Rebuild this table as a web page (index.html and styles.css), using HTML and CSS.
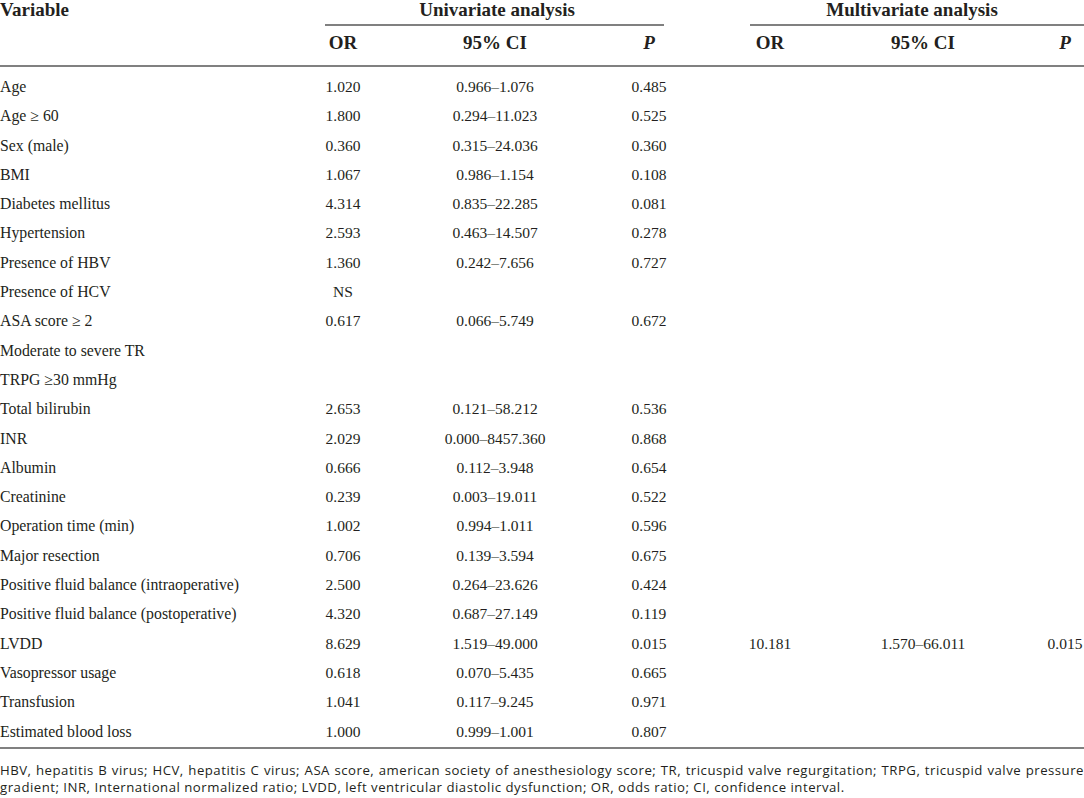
FILE: index.html
```html
<!DOCTYPE html>
<html lang="en">
<head>
<meta charset="utf-8">
<title>Table</title>
<link rel="stylesheet" href="styles.css">
</head>
<body>
<div class="page">
<table class="stats">
<colgroup>
<col class="c-var"><col class="c-or"><col class="c-ci"><col class="c-p"><col class="c-gap"><col class="c-mor"><col class="c-mci"><col class="c-mp">
</colgroup>
<thead>
<tr class="h1">
<th class="var">Variable</th>
<th colspan="3" class="grp"><div class="gtitle">Univariate analysis</div><div class="grule uni"></div></th>
<th></th>
<th colspan="3" class="grp"><div class="gtitle">Multivariate analysis</div><div class="grule multi"></div></th>
</tr>
<tr class="h2">
<th></th>
<th>OR</th>
<th>95% CI</th>
<th><i>P</i></th>
<th></th>
<th>OR</th>
<th>95% CI</th>
<th><i>P</i></th>
</tr>
</thead>
<tbody>
<tr class="first"><td>Age</td><td>1.020</td><td>0.966–1.076</td><td>0.485</td><td></td><td></td><td></td><td></td></tr>
<tr><td>Age ≥ 60</td><td>1.800</td><td>0.294–11.023</td><td>0.525</td><td></td><td></td><td></td><td></td></tr>
<tr><td>Sex (male)</td><td>0.360</td><td>0.315–24.036</td><td>0.360</td><td></td><td></td><td></td><td></td></tr>
<tr><td>BMI</td><td>1.067</td><td>0.986–1.154</td><td>0.108</td><td></td><td></td><td></td><td></td></tr>
<tr><td>Diabetes mellitus</td><td>4.314</td><td>0.835–22.285</td><td>0.081</td><td></td><td></td><td></td><td></td></tr>
<tr><td>Hypertension</td><td>2.593</td><td>0.463–14.507</td><td>0.278</td><td></td><td></td><td></td><td></td></tr>
<tr><td>Presence of HBV</td><td>1.360</td><td>0.242–7.656</td><td>0.727</td><td></td><td></td><td></td><td></td></tr>
<tr><td>Presence of HCV</td><td>NS</td><td></td><td></td><td></td><td></td><td></td><td></td></tr>
<tr><td>ASA score ≥ 2</td><td>0.617</td><td>0.066–5.749</td><td>0.672</td><td></td><td></td><td></td><td></td></tr>
<tr><td>Moderate to severe TR</td><td></td><td></td><td></td><td></td><td></td><td></td><td></td></tr>
<tr><td>TRPG ≥30 mmHg</td><td></td><td></td><td></td><td></td><td></td><td></td><td></td></tr>
<tr><td>Total bilirubin</td><td>2.653</td><td>0.121–58.212</td><td>0.536</td><td></td><td></td><td></td><td></td></tr>
<tr><td>INR</td><td>2.029</td><td>0.000–8457.360</td><td>0.868</td><td></td><td></td><td></td><td></td></tr>
<tr><td>Albumin</td><td>0.666</td><td>0.112–3.948</td><td>0.654</td><td></td><td></td><td></td><td></td></tr>
<tr><td>Creatinine</td><td>0.239</td><td>0.003–19.011</td><td>0.522</td><td></td><td></td><td></td><td></td></tr>
<tr><td>Operation time (min)</td><td>1.002</td><td>0.994–1.011</td><td>0.596</td><td></td><td></td><td></td><td></td></tr>
<tr><td>Major resection</td><td>0.706</td><td>0.139–3.594</td><td>0.675</td><td></td><td></td><td></td><td></td></tr>
<tr><td>Positive fluid balance (intraoperative)</td><td>2.500</td><td>0.264–23.626</td><td>0.424</td><td></td><td></td><td></td><td></td></tr>
<tr><td>Positive fluid balance (postoperative)</td><td>4.320</td><td>0.687–27.149</td><td>0.119</td><td></td><td></td><td></td><td></td></tr>
<tr><td>LVDD</td><td>8.629</td><td>1.519–49.000</td><td>0.015</td><td></td><td>10.181</td><td>1.570–66.011</td><td>0.015</td></tr>
<tr><td>Vasopressor usage</td><td>0.618</td><td>0.070–5.435</td><td>0.665</td><td></td><td></td><td></td><td></td></tr>
<tr><td>Transfusion</td><td>1.041</td><td>0.117–9.245</td><td>0.971</td><td></td><td></td><td></td><td></td></tr>
<tr class="last"><td>Estimated blood loss</td><td>1.000</td><td>0.999–1.001</td><td>0.807</td><td></td><td></td><td></td><td></td></tr>
</tbody>
</table>
<div class="note">
<span class="l1">HBV, hepatitis B virus; HCV, hepatitis C virus; ASA score, american society of anesthesiology score; TR, tricuspid valve regurgitation; TRPG, tricuspid valve pressure</span>
<span class="l2">gradient; INR, International normalized ratio; LVDD, left ventricular diastolic dysfunction; OR, odds ratio; CI, confidence interval.</span>
</div>
</div>
</body>
</html>
```
FILE: styles.css
```css
html, body {
  margin: 0;
  padding: 0;
  background: #ffffff;
}
.page {
  width: 1084px;
  color: #231f20;
  font-family: "Liberation Serif", "Times New Roman", serif;
}
.stats {
  width: 1084px;
  table-layout: fixed;
  border-collapse: collapse;
}
.c-var { width: 316px; }
.c-or { width: 54px; }
.c-ci { width: 250px; }
.c-p { width: 58px; }
.c-gap { width: 62px; }
.c-mor { width: 60px; }
.c-mci { width: 246px; }
.c-mp { width: 38px; }

.stats th {
  font-size: 19px;
  font-weight: bold;
  padding: 0;
  line-height: 20px;
  text-align: center;
}
.stats th i { font-style: italic; }
.h1 th { vertical-align: top; height: 26px; }
.h1 th.var { text-align: left; }
.grule {
  margin-top: 4px;
  border-bottom: 2px solid #808080;
}
.grule.uni { margin-left: 9px; margin-right: 14px; }
.grule.multi { margin-left: 10px; margin-right: 0; }
.h2 th {
  padding-top: 7px;
  padding-bottom: 12px;
  border-bottom: 2px solid #808080;
}
.stats td {
  font-size: 15.5px;
  line-height: 29.3px;
  padding: 0;
  text-align: center;
  white-space: nowrap;
}
.stats td:first-child { text-align: left; font-size: 15.8px; }
.stats tr.first td { padding-top: 5px; }
.stats tr.last td { padding-bottom: 1px; border-bottom: 2px solid #808080; }

.note {
  margin-top: 13px;
  font-family: "Open Sans", "DejaVu Sans", sans-serif;
  font-size: 13.2px;
  letter-spacing: 0.5px;
  line-height: 17px;
  color: #231f20;
}
.note span { display: block; white-space: nowrap; }
.note .l1 { text-align: justify; text-align-last: justify; }
```
